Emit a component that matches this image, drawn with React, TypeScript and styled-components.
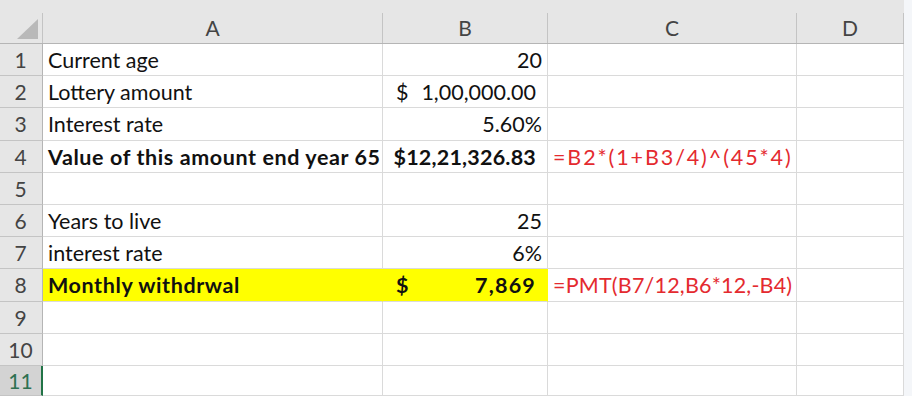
import React from 'react';
import styled, { createGlobalStyle } from 'styled-components';

const GlobalStyle = createGlobalStyle`
    html, body {
        margin: 0;
        padding: 0;
        background: #ffffff;
    }
    body {
        font-family: Lato, 'Liberation Sans', sans-serif;
    }
`;

const Page = styled.div`
    display: flex;
    width: 912px;
    height: 396px;
    overflow: hidden;
`;

const Sheet = styled.div`
    display: grid;
    grid-template-columns: 43px 340px 165px 249px 107px;
    grid-template-rows: 44px repeat(10, 32.2px) 1fr;
    width: 904px;
    height: 396px;
`;

const Strip = styled.div`
    flex: 1;
    background: #f4f6f9;
`;

const Corner = styled.div`
    background: #e6e6e6;
    border-bottom: 1px solid #b5b5b5;
    display: flex;
    align-items: flex-end;
    justify-content: flex-end;
`;

const CornerInner = styled.div`
    width: 42px;
    height: 30px;
    border-right: 1px solid #c4c4c4;
    display: flex;
    align-items: flex-end;
    justify-content: flex-end;
    padding: 0 4px 4px 0;
    box-sizing: border-box;
`;

const Triangle = styled.div`
    width: 21px;
    height: 20px;
    background: #b9b9b9;
    clip-path: polygon(100% 0, 100% 100%, 0 100%);
`;

const ColHead = styled.div`
    background: #e6e6e6;
    border-bottom: 1px solid #b5b5b5;
    display: flex;
    align-items: flex-end;
`;

const ColLabel = styled.div`
    flex: 1;
    height: 30px;
    border-right: 1px solid #c4c4c4;
    display: flex;
    align-items: center;
    justify-content: center;
    font-size: 21px;
    color: #444444;
    padding-bottom: 1px;
    box-sizing: border-box;
`;

const RowHead = styled.div<{ $active?: boolean }>`
    background: ${p => (p.$active ? '#d3d3d3' : '#e6e6e6')};
    border-right: ${p => (p.$active ? '2px solid #217346' : '1px solid #b5b5b5')};
    border-bottom: 1px solid #c4c4c4;
    color: ${p => (p.$active ? '#2e7151' : '#444444')};
    display: flex;
    align-items: center;
    justify-content: center;
    font-size: 21px;
    box-sizing: border-box;
    padding-right: ${p => (p.$active ? '0' : '1px')};
`;

const Cell = styled.div<{
    $align?: 'left' | 'right';
    $bold?: boolean;
    $red?: boolean;
    $fill?: string;
    $padRight?: number;
    $spacing?: number;
}>`
    border-right: 1px solid ${p => p.$fill ?? '#dadada'};
    border-bottom: 1px solid #dadada;
    background: ${p => p.$fill ?? '#ffffff'};
    display: flex;
    align-items: center;
    justify-content: ${p => (p.$align === 'right' ? 'flex-end' : 'flex-start')};
    padding: 1px ${p => p.$padRight ?? 5}px 0 5px;
    font-size: 21.5px;
    font-weight: ${p => (p.$bold ? 700 : 400)};
    letter-spacing: ${p => p.$spacing ?? 0}px;
    color: ${p => (p.$red ? '#e42a2f' : '#111111')};
    white-space: nowrap;
    overflow: visible;
    box-sizing: border-box;
    min-width: 0;
`;

const Accounting = styled.div<{ $bold?: boolean; $fill?: string }>`
    border-right: 1px solid ${p => p.$fill ?? '#dadada'};
    border-bottom: 1px solid #dadada;
    background: ${p => p.$fill ?? '#ffffff'};
    display: flex;
    align-items: center;
    justify-content: space-between;
    padding: 1px 11px 0 13px;
    font-size: 21.5px;
    font-weight: ${p => (p.$bold ? 700 : 400)};
    letter-spacing: ${p => (p.$bold ? 1.2 : 0)}px;
    color: #111111;
    white-space: nowrap;
    box-sizing: border-box;
`;

type CellData =
    | {
          kind: 'text';
          value: string;
          align?: 'left' | 'right';
          bold?: boolean;
          red?: boolean;
          fill?: string;
          padRight?: number;
          spacing?: number;
      }
    | { kind: 'acct'; value: string; bold?: boolean; fill?: string }
    | { kind: 'empty'; fill?: string };

const YELLOW = '#ffff00';

const rows: CellData[][] = [
    [
        { kind: 'text', value: 'Current age' },
        { kind: 'text', value: '20', align: 'right' },
        { kind: 'empty' },
        { kind: 'empty' },
    ],
    [
        { kind: 'text', value: 'Lottery amount' },
        { kind: 'acct', value: '1,00,000.00' },
        { kind: 'empty' },
        { kind: 'empty' },
    ],
    [
        { kind: 'text', value: 'Interest rate' },
        { kind: 'text', value: '5.60%', align: 'right' },
        { kind: 'empty' },
        { kind: 'empty' },
    ],
    [
        { kind: 'text', value: 'Value of this amount end year 65', bold: true, spacing: 0.6 },
        { kind: 'text', value: '$12,21,326.83', align: 'right', bold: true, padRight: 11, spacing: 0.2 },
        { kind: 'text', value: '=B2*(1+B3/4)^(45*4)', red: true, spacing: 1.9 },
        { kind: 'empty' },
    ],
    [{ kind: 'empty' }, { kind: 'empty' }, { kind: 'empty' }, { kind: 'empty' }],
    [
        { kind: 'text', value: 'Years to live' },
        { kind: 'text', value: '25', align: 'right' },
        { kind: 'empty' },
        { kind: 'empty' },
    ],
    [
        { kind: 'text', value: 'interest rate' },
        { kind: 'text', value: '6%', align: 'right' },
        { kind: 'empty' },
        { kind: 'empty' },
    ],
    [
        { kind: 'text', value: 'Monthly withdrwal', bold: true, fill: YELLOW, spacing: 0.6 },
        { kind: 'acct', value: '7,869', bold: true, fill: YELLOW },
        { kind: 'text', value: '=PMT(B7/12,B6*12,-B4)', red: true, spacing: 0.2 },
        { kind: 'empty' },
    ],
    [{ kind: 'empty' }, { kind: 'empty' }, { kind: 'empty' }, { kind: 'empty' }],
    [{ kind: 'empty' }, { kind: 'empty' }, { kind: 'empty' }, { kind: 'empty' }],
    [{ kind: 'empty' }, { kind: 'empty' }, { kind: 'empty' }, { kind: 'empty' }],
];

const renderCell = (c: CellData, key: string) => {
    if (c.kind === 'acct') {
        return (
            <Accounting key={key} $bold={c.bold} $fill={c.fill}>
                <span>$</span>
                <span>{c.value}</span>
            </Accounting>
        );
    }
    if (c.kind === 'text') {
        return (
            <Cell
                key={key}
                $align={c.align}
                $bold={c.bold}
                $red={c.red}
                $fill={c.fill}
                $padRight={c.padRight}
                $spacing={c.spacing}
            >
                {c.value}
            </Cell>
        );
    }
    return <Cell key={key} $fill={c.fill} />;
};

const App: React.FC = () => {
    return (
        <>
            <GlobalStyle />
            <Page>
                <Sheet>
                    <Corner>
                        <CornerInner>
                            <Triangle />
                        </CornerInner>
                    </Corner>
                    {['A', 'B', 'C', 'D'].map(letter => (
                        <ColHead key={letter}>
                            <ColLabel>{letter}</ColLabel>
                        </ColHead>
                    ))}
                    {rows.map((row, i) => (
                        <React.Fragment key={i}>
                            <RowHead $active={i === 10}>{i + 1}</RowHead>
                            {row.map((c, j) => renderCell(c, `${i}-${j}`))}
                        </React.Fragment>
                    ))}
                </Sheet>
                <Strip />
            </Page>
        </>
    );
};

export default App;
